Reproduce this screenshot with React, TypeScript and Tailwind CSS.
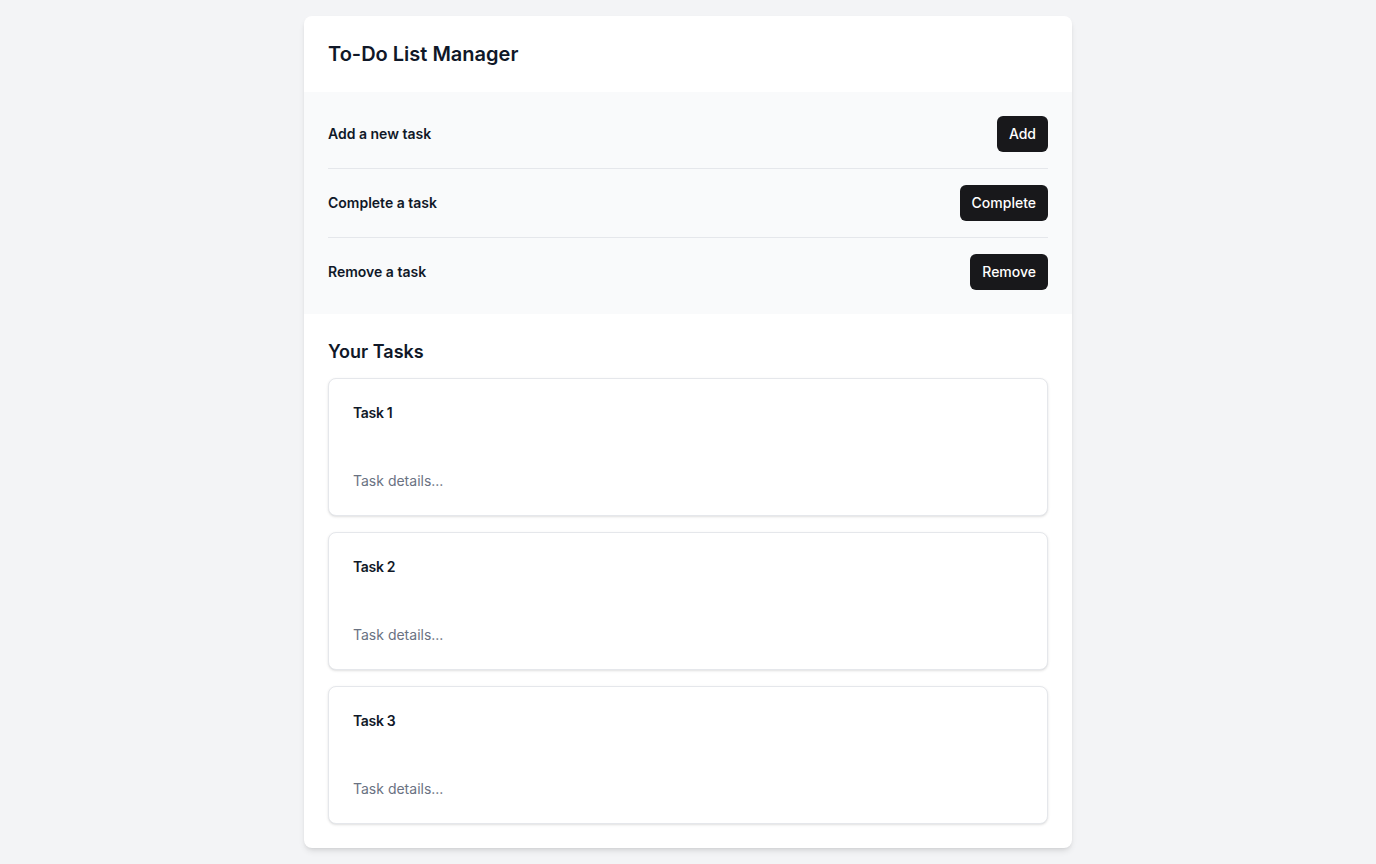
export default function App() {
  const actions = [
    { label: "Add a new task", button: "Add" },
    { label: "Complete a task", button: "Complete" },
    { label: "Remove a task", button: "Remove" },
  ];
  const tasks = ["Task 1", "Task 2", "Task 3"];

  return (
    <div
      className="min-h-screen bg-gray-100 py-4 text-gray-900"
      style={{ fontFamily: "Inter, 'Noto Sans', sans-serif" }}
    >
      <div className="mx-auto w-[768px] overflow-hidden rounded-lg bg-white shadow-md">
        <div className="px-6 py-6">
          <h1 className="text-xl leading-7 font-semibold">To-Do List Manager</h1>
        </div>

        <div className="bg-gray-50 px-6 py-2">
          {actions.map((a, i) => (
            <div
              key={a.label}
              className={`flex items-center justify-between py-4 ${i < actions.length - 1 ? "border-b border-gray-200" : ""}`}
            >
              <span className="text-sm font-semibold">{a.label}</span>
              <button className="h-9 rounded-md bg-zinc-900 px-3 text-sm font-medium text-white">
                {a.button}
              </button>
            </div>
          ))}
        </div>

        <div className="p-6">
          <h2 className="mb-3 text-lg leading-7 font-semibold">Your Tasks</h2>
          <div className="flex flex-col gap-4">
            {tasks.map((t) => (
              <div key={t} className="flex flex-col gap-12 rounded-lg border border-gray-200 bg-white p-6 shadow-sm">
                <h3 className="text-sm font-semibold tracking-tight">{t}</h3>
                <p className="text-sm text-gray-500">Task details...</p>
              </div>
            ))}
          </div>
        </div>
      </div>
    </div>
  );
}
